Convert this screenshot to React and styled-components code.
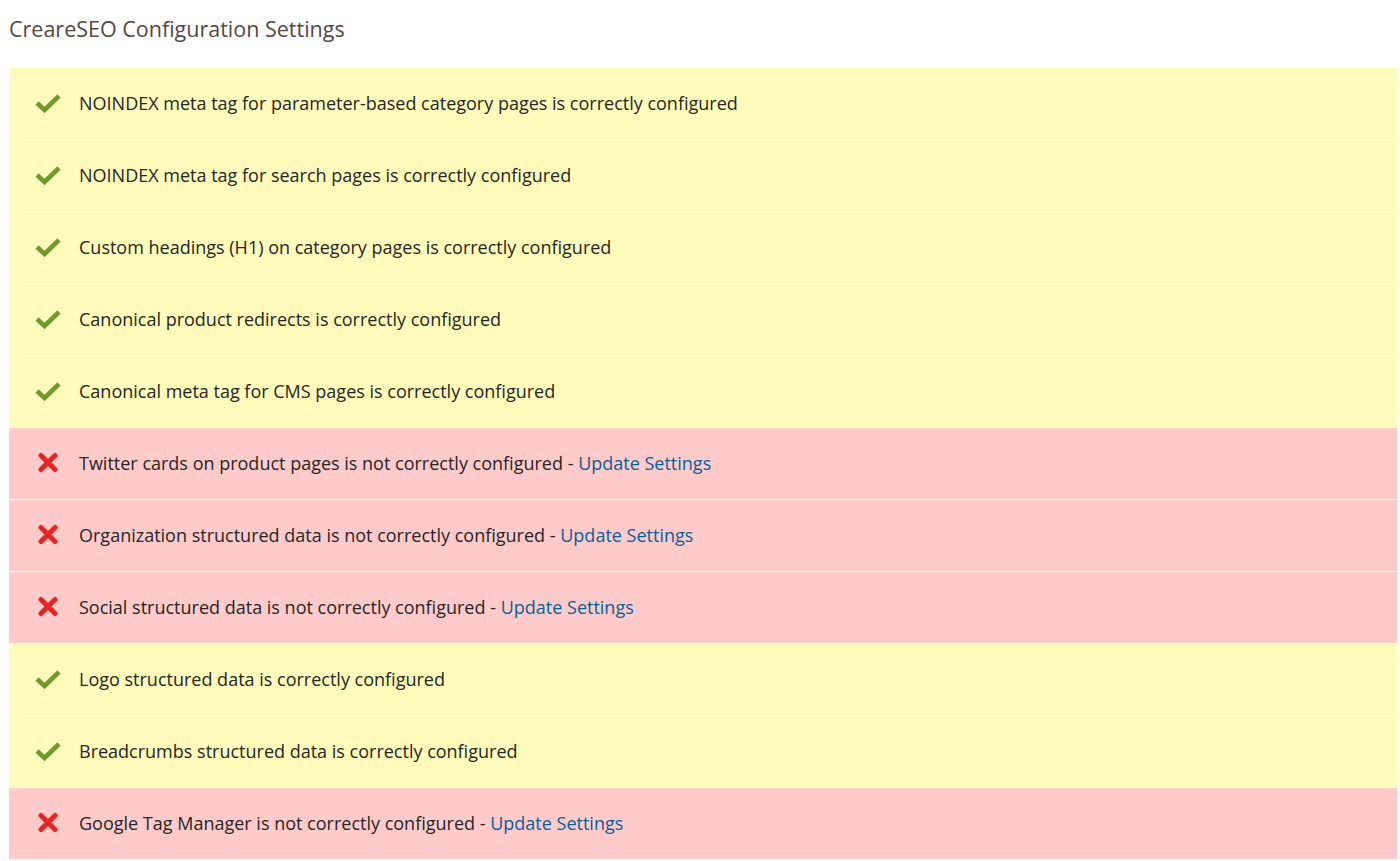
import React from "react";
import styled, { createGlobalStyle } from "styled-components";

const GlobalStyle = createGlobalStyle`
  html, body {
    margin: 0;
    padding: 0;
    background: #ffffff;
  }
  body {
    font-family: "Open Sans", "Liberation Sans", sans-serif;
    color: #2b2b2b;
  }
`;

const Page = styled.div`
  padding: 14px 3px 0 9px;
`;

const Title = styled.h2`
  margin: 0 0 24px;
  font-size: 21.5px;
  font-weight: 400;
  line-height: 30px;
  color: #514943;
`;

const List = styled.ul`
  list-style: none;
  margin: 0;
  padding: 0;
`;

const Row = styled.li`
  display: flex;
  align-items: center;
  gap: 18px;
  height: 71px;
  box-sizing: border-box;
  padding: 0 0 2px 26px;
  border-bottom: 1px solid #ffffff;
  height: 72px;
  background: ${(p) => (p.$ok ? "#fffbbb" : "#fecbca")};
  font-size: 18px;
  color: #262626;
`;

const IconBox = styled.span`
  display: flex;
  align-items: center;
  justify-content: center;
  width: 26px;
  height: 26px;
`;

const Link = styled.a`
  color: #0a5e94;
  text-decoration: none;
`;

const Check = () => (
  <svg width="26" height="20" viewBox="0 0 26 20">
    <path
      d="M2 10 L9.5 17 L24 3"
      fill="none"
      stroke="#6e9c2c"
      strokeWidth="4.6"
      strokeLinejoin="miter"
    />
  </svg>
);

const Cross = () => (
  <svg width="22" height="21" viewBox="0 0 22 21">
    <path
      d="M4 3.5 L18 17.5 M18 3.5 L4 17.5"
      fill="none"
      stroke="#e42521"
      strokeWidth="5"
      strokeLinecap="round"
    />
  </svg>
);

const items = [
  { ok: true, text: "NOINDEX meta tag for parameter-based category pages is correctly configured" },
  { ok: true, text: "NOINDEX meta tag for search pages is correctly configured" },
  { ok: true, text: "Custom headings (H1) on category pages is correctly configured" },
  { ok: true, text: "Canonical product redirects is correctly configured" },
  { ok: true, text: "Canonical meta tag for CMS pages is correctly configured" },
  { ok: false, text: "Twitter cards on product pages is not correctly configured" },
  { ok: false, text: "Organization structured data is not correctly configured" },
  { ok: false, text: "Social structured data is not correctly configured" },
  { ok: true, text: "Logo structured data is correctly configured" },
  { ok: true, text: "Breadcrumbs structured data is correctly configured" },
  { ok: false, text: "Google Tag Manager is not correctly configured" },
];

export default function App() {
  return (
    <Page>
      <GlobalStyle />
      <Title>CreareSEO Configuration Settings</Title>
      <List>
        {items.map((item) => (
          <Row key={item.text} $ok={item.ok}>
            <IconBox>{item.ok ? <Check /> : <Cross />}</IconBox>
            <span>
              {item.text}
              {!item.ok && (
                <>
                  {" - "}
                  <Link href="#">Update Settings</Link>
                </>
              )}
            </span>
          </Row>
        ))}
      </List>
    </Page>
  );
}
